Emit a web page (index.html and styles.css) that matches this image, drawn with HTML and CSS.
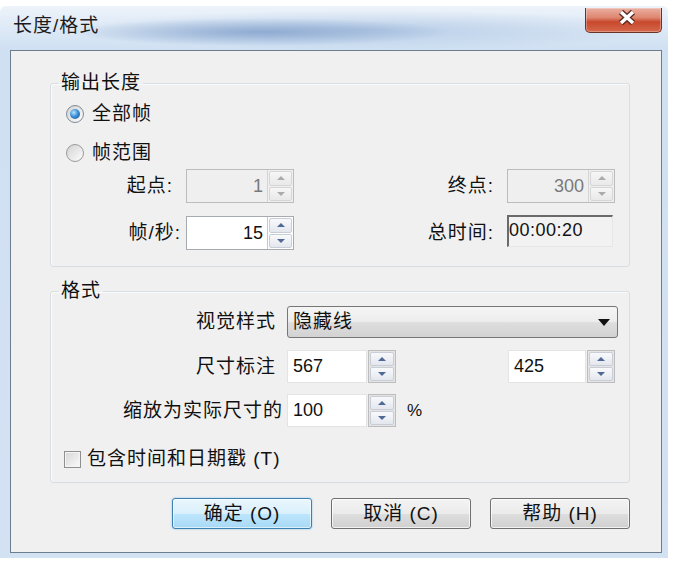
FILE: index.html
```html
<!doctype html>
<html lang="zh-CN">
  <head>
    <meta charset="UTF-8" />
    <title>长度/格式</title>
    <link rel="stylesheet" href="styles.css">
  </head>
  <body>
    <div class="window">
      <div class="titlebar">
        <span class="title">长度/格式</span>
        <span class="close">
          <svg width="22" height="17" viewBox="0 0 22 17">
            <path d="M5 3 L17 14 M17 3 L5 14" stroke="#5a2a20" stroke-width="6" fill="none" />
            <path d="M5 3 L17 14 M17 3 L5 14" stroke="#fff" stroke-width="3.4" fill="none" />
          </svg>
        </span>
      </div>
      <div class="client">
        <fieldset class="group group-length">
          <legend>输出长度</legend>
          <label class="radio-row row-all"><span class="radio on"></span>全部帧</label>
          <label class="radio-row row-range"><span class="radio"></span>帧范围</label>
          <div class="field-row range-row">
            <span class="lbl-l lbl-start">起点:</span>
            <div class="spin disabled">
              <span class="spin-val">1</span>
              <span class="spin-btns"><span class="up"></span><span class="dn"></span></span>
            </div>
            <span class="lbl-r">终点:</span>
            <div class="spin disabled">
              <span class="spin-val">300</span>
              <span class="spin-btns"><span class="up"></span><span class="dn"></span></span>
            </div>
          </div>
          <div class="field-row fps-row">
            <span class="lbl-l lbl-fps">帧/秒:</span>
            <div class="spin">
              <span class="spin-val">15</span>
              <span class="spin-btns"><span class="up"></span><span class="dn"></span></span>
            </div>
            <span class="lbl-r">总时间:</span>
            <div class="readout">00:00:20</div>
          </div>
        </fieldset>

        <fieldset class="group group-format">
          <legend>格式</legend>
          <div class="field-row combo-row">
            <span class="lbl-f short">视觉样式</span>
            <div class="combo">
              <span>隐藏线</span>
              <svg width="12" height="7" viewBox="0 0 12 7"><path d="M0 0 H12 L6 7 Z" fill="#111" /></svg>
            </div>
          </div>
          <div class="field-row size-row">
            <span class="lbl-f short">尺寸标注</span>
            <div class="spin split">
              <span class="spin-val">567</span>
              <span class="spin-btns"><span class="up"></span><span class="dn"></span></span>
            </div>
            <div class="spin split second">
              <span class="spin-val">425</span>
              <span class="spin-btns"><span class="up"></span><span class="dn"></span></span>
            </div>
          </div>
          <div class="field-row scale-row">
            <span class="lbl-f">缩放为实际尺寸的</span>
            <div class="spin split">
              <span class="spin-val">100</span>
              <span class="spin-btns"><span class="up"></span><span class="dn"></span></span>
            </div>
            <span class="pct">%</span>
          </div>
          <label class="check-row"><span class="check"></span>包含时间和日期戳 (T)</label>
        </fieldset>

        <div class="actions">
          <button class="btn default">确定 (O)</button>
          <button class="btn">取消 (C)</button>
          <button class="btn">帮助 (H)</button>
        </div>
      </div>
    </div>
  </body>
</html>
```

FILE: styles.css
```css
body {
  margin: 0;
  padding: 0;
  background-color: #fff;
  font-family: "Liberation Sans", "Noto Sans CJK SC", sans-serif;
  font-size: 19px;
  line-height: 22px;
  letter-spacing: 1px;
  color: #111;
}

/* window frame */

.window {
  width: 668px;
  height: 552px;
  margin-top: 6px;
  padding: 0 6px 5px 10px;
  box-sizing: border-box;
  border-radius: 6px 6px 0 0;
  background: linear-gradient(to bottom, #edf3fa 0, #cfe0f2 44px, #d3e2f3 100%);
  display: flex;
  flex-direction: column;
}

.titlebar {
  height: 44px;
  flex: none;
  display: flex;
  justify-content: space-between;
  align-items: flex-start;
  background:
    radial-gradient(ellipse 190px 14px at 250px 26px, rgba(120, 152, 198, 0.7), rgba(120, 152, 198, 0)),
    radial-gradient(ellipse 300px 20px at 360px 24px, rgba(150, 180, 218, 0.5), rgba(150, 180, 218, 0));
}

.title {
  margin: 9px 0 0 3px;
  color: #1c1c1c;
}

.close {
  width: 77px;
  height: 25px;
  margin-top: 2px;
  box-sizing: border-box;
  border: 1px solid #6a3328;
  border-top: none;
  border-radius: 0 0 5px 5px;
  background: linear-gradient(to bottom, #eab0a2 0, #de8670 40%, #c9482d 58%, #d4684b 100%);
  box-shadow: inset 0 0 0 1px rgba(255, 255, 255, 0.3);
  display: flex;
  justify-content: center;
  padding: 1px 0 0 6px;
}

.client {
  height: 503px;
  box-sizing: border-box;
  border: 1px solid #6c7d90;
  background-color: #f0f0f0;
  padding: 0 31px 0 39px;
  display: flex;
  flex-direction: column;
}

/* group boxes */

.group {
  margin: 0;
  padding: 0 0 16px;
  min-width: 0;
  border: 1px solid #d8dfe4;
  border-radius: 3px;
  box-shadow: inset 1px 1px #fbfbfb;
  display: flex;
  flex-direction: column;
}

.group legend {
  margin-left: 8px;
  padding: 0 2px;
  line-height: 22px;
}

.group-length {
  margin-top: 21px;
}

.group-format {
  margin-top: 13px;
  padding-bottom: 13px;
}

.radio-row {
  display: flex;
  align-items: center;
  height: 20px;
  padding-left: 15px;
  gap: 8px;
}

.row-all {
  margin-top: 10px;
}

.row-range {
  margin-top: 19px;
}

.radio {
  width: 18px;
  height: 18px;
  box-sizing: border-box;
  border-radius: 50%;
  border: 1px solid #9a9a9a;
  background: linear-gradient(135deg, #d2d2d2, #fdfdfd);
  display: flex;
  justify-content: center;
  align-items: center;
}

.radio.on {
  border-color: #7e8a96;
}

.radio.on::after {
  content: "";
  width: 10px;
  height: 10px;
  border-radius: 50%;
  background: radial-gradient(circle at 38% 35%, #b6e6ff 0, #3d8fd6 45%, #124a86 100%);
}

.field-row {
  display: flex;
  align-items: center;
  height: 34px;
}

.range-row {
  margin-top: 6px;
}

.fps-row {
  margin-top: 13px;
}

.lbl-l {
  width: 131px;
  box-sizing: border-box;
  text-align: right;
  margin-right: 4px;
}

.lbl-start {
  padding-right: 9px;
}

.lbl-fps {
  padding-right: 1px;
}

.lbl-r {
  width: 200px;
  text-align: right;
  margin-right: 13px;
}

/* spin boxes */

.spin {
  width: 108px;
  height: 34px;
  box-sizing: border-box;
  border: 1px solid #a6abb2;
  background-color: #fff;
  display: flex;
  font-size: 18px;
  letter-spacing: 0;
}

.spin-val {
  flex: 1;
  text-align: right;
  padding-right: 4px;
  line-height: 32px;
}

.spin-btns {
  width: 26px;
  border-left: 1px solid #c8c8c8;
  display: flex;
  flex-direction: column;
  gap: 1px;
  padding: 1px;
  box-sizing: border-box;
  color: #4f6896;
}

.spin-btns span {
  flex: 1;
  border: 1px solid #c9ced6;
  border-radius: 2px;
  background: linear-gradient(to bottom, #f8f9fb, #e3e7ee);
  display: flex;
  justify-content: center;
  align-items: center;
}

.spin-btns .up::before,
.spin-btns .dn::before {
  content: "";
  border-left: 4px solid transparent;
  border-right: 4px solid transparent;
}

.spin-btns .up::before {
  border-bottom: 4px solid currentColor;
}

.spin-btns .dn::before {
  border-top: 4px solid currentColor;
}

.spin.disabled {
  background-color: #efefef;
  border-color: #bcbcbc;
  color: #7a7a7a;
}

.spin.disabled .spin-btns {
  color: #ababab;
  border-left-color: #d4d4d4;
}

.spin.disabled .spin-btns span {
  border-color: #d6d6d6;
  background: linear-gradient(to bottom, #f6f6f6, #e9e9e9);
}

.spin.split {
  width: 109px;
  height: 33px;
  border: none;
  background: none;
}

.spin.split .spin-val {
  text-align: left;
  padding: 0 0 0 5px;
  background-color: #fff;
  border: 1px solid #e4e4e4;
  line-height: 31px;
  margin-right: 1px;
}

.spin.split .spin-btns {
  width: 28px;
  border: 1px solid #bdbdbd;
  background-color: #e4e4e4;
}

.spin.second {
  width: 107px;
  margin-left: 112px;
}

.readout {
  width: 106px;
  height: 32px;
  box-sizing: border-box;
  align-self: flex-start;
  margin-top: -1px;
  border-style: solid;
  border-width: 2px 1px 1px 2px;
  border-color: #6a6a6a #e6e6e6 #e6e6e6 #6a6a6a;
  background-color: #f2f2f2;
  font-size: 18px;
  line-height: 26px;
  letter-spacing: 0.5px;
}

/* format group */

.combo-row {
  margin-top: 4px;
  height: 32px;
}

.size-row {
  margin-top: 12px;
  height: 33px;
}

.scale-row {
  margin-top: 11px;
  height: 33px;
}

.lbl-f {
  width: 232px;
  box-sizing: border-box;
  text-align: right;
  margin-right: 4px;
}

.lbl-f.short {
  padding-right: 7px;
}

.combo {
  width: 331px;
  height: 32px;
  box-sizing: border-box;
  border: 1px solid #767676;
  border-radius: 3px;
  background: linear-gradient(to bottom, #f5f5f5 0, #ececec 50%, #dedede 52%, #d2d2d2 100%);
  display: flex;
  justify-content: space-between;
  align-items: center;
  padding: 0 7px 0 5px;
}

.pct {
  margin-left: 11px;
  font-size: 17px;
}

.check-row {
  display: flex;
  align-items: center;
  height: 20px;
  margin-top: 22px;
  padding-left: 13px;
  gap: 6px;
}

.check {
  width: 17px;
  height: 17px;
  box-sizing: border-box;
  border: 1px solid #8f8f8f;
  background: linear-gradient(135deg, #d6d6d6, #fbfbfb);
  box-shadow: inset 0 0 0 1px #f4f4f4;
}

/* buttons */

.actions {
  display: flex;
  justify-content: flex-end;
  gap: 19px;
  margin-top: 15px;
}

.btn {
  width: 140px;
  height: 31px;
  font: inherit;
  letter-spacing: inherit;
  color: #111;
  border: 1px solid #707070;
  border-radius: 3px;
  background: linear-gradient(to bottom, #f3f3f3 0, #ebebeb 50%, #dedede 51%, #d0d0d0 100%);
  box-shadow: inset 0 0 0 1px rgba(255, 255, 255, 0.7);
  padding: 0;
  cursor: pointer;
}

.btn.default {
  border-color: #3c7fb1;
  background: linear-gradient(to bottom, #eaf6fd 0, #d9f0fc 50%, #bee6fd 51%, #a7d9f5 100%);
  box-shadow: inset 0 0 0 1px rgba(255, 255, 255, 0.6), 0 0 2px #7cc2ec;
}
```
